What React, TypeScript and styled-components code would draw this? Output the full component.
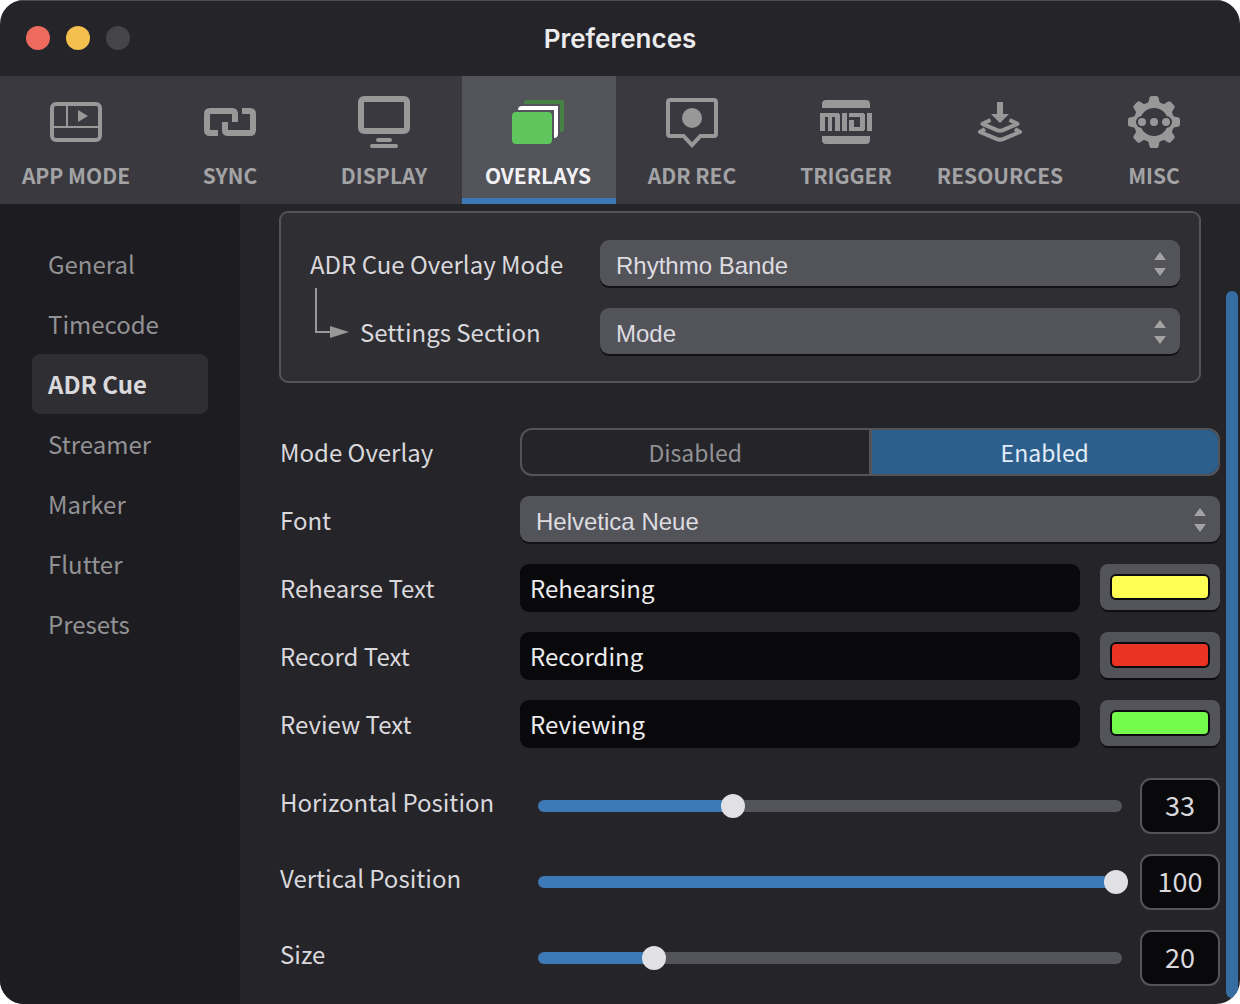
import React, { useState } from 'react';
import styled, { createGlobalStyle } from 'styled-components';

const color = {
  window: '#252429',
  toolbar: '#3a393f',
  sidebar: '#1d1c20',
  raised: '#53535a',
  panel: '#2f2e33',
  field: '#09090b',
  accent: '#3d7ab5',
  accentDeep: '#2d5f8c',
  scroll: '#366da2',
  text: '#d9d8dc',
  muted: '#929295',
  icon: '#989898',
};

const sans = '"Noto Sans CJK SC", "Open Sans", sans-serif';
const helvetica = '"Liberation Sans", Arial, sans-serif';

const GlobalStyle = createGlobalStyle`
  * { box-sizing: border-box; }
  body { margin: 0; background: #fff; font-family: ${sans}; }
  button, input, select { font: inherit; margin: 0; }
`;

const Window = styled.div`
  display: flex;
  flex-direction: column;
  min-height: 100vh;
  overflow: hidden;
  border-radius: 24px;
  background: ${color.window};
  color: ${color.text};
`;

const TitleBar = styled.header`
  display: grid;
  grid-template-columns: 1fr auto 1fr;
  align-items: center;
  height: 76px;
  padding: 0 26px;
  box-shadow: inset 0 1px 0 #4c4c50;
`;

const Lights = styled.div`
  display: flex;
  gap: 16px;
`;

const Light = styled.button<{ $fill: string }>`
  width: 24px;
  height: 24px;
  padding: 0;
  border: 0;
  border-radius: 50%;
  background: ${(p) => p.$fill};
`;

const Title = styled.h1`
  margin: 0;
  padding-top: 2px;
  font: 600 26px/32px Inter, sans-serif;
  color: #ececee;
`;

const Toolbar = styled.nav`
  display: flex;
  padding-right: 8px;
  background: ${color.toolbar};
`;

const Tab = styled.button<{ $active: boolean }>`
  display: flex;
  flex: 1;
  flex-direction: column;
  align-items: center;
  gap: 11px;
  min-width: 0;
  height: 128px;
  padding: 20px 2px 0 0;
  border: 0;
  border-bottom: 6px solid ${(p) => (p.$active ? color.accent : 'transparent')};
  background: ${(p) => (p.$active ? color.raised : 'transparent')};
  color: ${(p) => (p.$active ? '#f2f2f6' : '#a3a3a6')};
  font-size: 21px;
  font-weight: 700;
  line-height: 32px;
  white-space: nowrap;

  svg { color: ${color.icon}; }
`;

const Body = styled.div`
  display: flex;
  flex: 1;
`;

const Sidebar = styled.nav`
  display: flex;
  flex-direction: column;
  flex: none;
  width: 240px;
  padding: 30px 32px;
  background: ${color.sidebar};
`;

const SideItem = styled.button<{ $active: boolean }>`
  height: 60px;
  padding: 0 16px;
  border: 0;
  border-radius: 8px;
  background: ${(p) => (p.$active ? color.panel : 'transparent')};
  color: ${(p) => (p.$active ? color.text : color.muted)};
  font-size: 24px;
  font-weight: ${(p) => (p.$active ? 700 : 400)};
  line-height: 36px;
  text-align: left;
`;

const Content = styled.main`
  display: flex;
  flex: 1;
  flex-direction: column;
  min-width: 0;
  padding: 8px 6px 18px 40px;
`;

const Group = styled.section`
  display: flex;
  flex-direction: column;
  gap: 20px;
  margin: 0 20px 46px 0;
  padding: 28px 20px 26px 30px;
  border-radius: 8px;
  outline: 2px solid ${color.raised};
  outline-offset: -1px;
  background: ${color.panel};
`;

const Stack = styled.section`
  display: flex;
  flex-direction: column;
  gap: 20px;

  & + & { margin-top: 30px; }
`;

const Row = styled.div<{ $label: number }>`
  display: grid;
  grid-template-columns: ${(p) => p.$label}px 1fr;
  align-items: center;
`;

const Label = styled.label`
  font-size: 24px;
  line-height: 36px;
  white-space: nowrap;
`;

const SliderLabel = styled(Label)`
  padding-bottom: 8px;
`;

const SubLabel = styled.div`
  display: flex;
  align-items: center;
  gap: 10px;

  svg { margin-top: -20px; color: ${color.icon}; }
`;

const SelectBox = styled.div`
  position: relative;
  height: 48px;

  svg {
    position: absolute;
    top: 12px;
    right: 14px;
    color: #a3a3a3;
    pointer-events: none;
  }
`;

const Select = styled.select`
  width: 100%;
  height: 46px;
  padding: 6px 16px 0;
  border: 0;
  border-radius: 9px;
  appearance: none;
  background: ${color.raised};
  box-shadow: 0 2px 0 #121215;
  color: #dddce0;
  font: 24px/32px ${helvetica};
`;

const Segments = styled.div`
  display: flex;
  height: 48px;
  overflow: hidden;
  border: 2px solid ${color.raised};
  border-radius: 12px;
`;

const Segment = styled.button<{ $on: boolean }>`
  flex: 1;
  padding: 0;
  border: 0;
  background: ${(p) => (p.$on ? color.accentDeep : 'transparent')};
  color: ${(p) => (p.$on ? '#e2edf7' : color.muted)};
  font-size: 23px;
  line-height: 32px;

  & + & { border-left: 3px solid ${color.raised}; }
`;

const FieldPair = styled.div`
  display: flex;
  align-items: flex-start;
  gap: 20px;
`;

const TextField = styled.input`
  flex: 1;
  min-width: 0;
  height: 48px;
  padding: 0 10px 2px;
  border: 0;
  border-radius: 9px;
  background: ${color.field};
  color: #ececee;
  font-size: 24px;
`;

const ColorWell = styled.input`
  width: 120px;
  height: 46px;
  padding: 10px;
  border: 0;
  border-radius: 8px;
  appearance: none;
  background: ${color.raised};
  box-shadow: 0 2px 0 #0e0e11;

  &::-webkit-color-swatch-wrapper { padding: 0; }
  &::-webkit-color-swatch {
    border: 2px solid #0b0b0d;
    border-radius: 6px;
  }
`;

const SliderRow = styled.div`
  display: flex;
  align-items: center;
`;

const Slider = styled.input`
  flex: 1;
  min-width: 0;
  height: 12px;
  margin: 0 18px;
  border-radius: 6px;
  appearance: none;
  background: linear-gradient(${color.accent}, ${color.accent}) left / var(--fill) 100% no-repeat ${color.raised};

  &::-webkit-slider-runnable-track {
    height: 12px;
    margin: 0 -6px;
  }
  &::-webkit-slider-thumb {
    width: 24px;
    height: 24px;
    margin-top: -6px;
    border-radius: 50%;
    appearance: none;
    background: #e1e0e5;
  }
`;

const NumberField = styled.input`
  width: 80px;
  height: 56px;
  padding: 0 0 4px;
  border: 2px solid ${color.raised};
  border-radius: 11px;
  background: ${color.field};
  color: ${color.text};
  font-size: 27px;
  text-align: center;
`;

const ScrollTrack = styled.div`
  display: flex;
  flex: none;
  flex-direction: column;
  justify-content: flex-end;
  width: 14px;
  padding: 0 2px 6px 0;
`;

const ScrollThumb = styled.div`
  height: 89%;
  border-radius: 6px;
  background: ${color.scroll};
`;

const Glyph = ({ children }: { children: React.ReactNode }) => (
  <svg width="52" height="52" viewBox="0 0 52 52" fill="none" aria-hidden="true">
    {children}
  </svg>
);

const AppModeIcon = () => (
  <Glyph>
    <rect x="2" y="8" width="48" height="36" rx="4" stroke="currentColor" strokeWidth="4" />
    <path d="M17 10V31M3 31H49" stroke="currentColor" strokeWidth="2" />
    <path d="M28 14L38 20L28 26Z" fill="currentColor" />
  </Glyph>
);

const SyncIcon = () => (
  <Glyph>
    <path
      d="M14 37H6Q3 37 3 34V18Q3 15 6 15H28Q31 15 31 18V26M38 15H46Q49 15 49 18V34Q49 37 46 37H24Q21 37 21 34V26"
      stroke="currentColor"
      strokeWidth="6"
    />
  </Glyph>
);

const DisplayIcon = () => (
  <Glyph>
    <rect x="3" y="3" width="46" height="32" rx="3" stroke="currentColor" strokeWidth="6" />
    <rect x="18" y="42" width="16" height="4" rx="2" fill="currentColor" />
    <rect x="12" y="48" width="28" height="4" rx="2" fill="currentColor" />
  </Glyph>
);

const OverlaysIcon = () => (
  <Glyph>
    <path d="M12 8Q12 4 16 4H52V32Q52 36 48 36V8Z" fill="#458344" />
    <path d="M6 14Q6 10 10 10H46V38Q46 42 42 42V14Z" fill="#fff" />
    <rect y="16" width="40" height="32" rx="4" fill="#5fc55c" />
  </Glyph>
);

const AdrRecIcon = () => (
  <Glyph>
    <path
      d="M4 4H48Q50 4 50 6V38Q50 40 48 40H34.500L26 49L17.500 40H4Q2 40 2 38V6Q2 4 4 4Z"
      stroke="currentColor"
      strokeWidth="4"
    />
    <circle cx="26" cy="22" r="10" fill="currentColor" />
  </Glyph>
);

const TriggerIcon = () => (
  <Glyph>
    <g fill="currentColor">
      <path d="M2 12V8Q2 4 6 4H46Q50 4 50 8V12ZM2 40V44Q2 48 6 48H46Q50 48 50 44V40Z" />
      <rect x="0" y="17" width="19" height="4" />
      <rect x="0" y="17" width="5" height="18" />
      <rect x="8" y="17" width="4" height="18" />
      <rect x="15" y="18" width="5" height="17" />
      <rect x="22" y="17" width="5" height="18" />
      <rect x="29" y="17" width="15" height="4" />
      <rect x="40" y="18" width="5" height="16" />
      <rect x="29" y="31" width="15" height="4" />
      <rect x="29" y="24" width="5" height="11" />
      <rect x="47" y="17" width="5" height="18" />
    </g>
  </Glyph>
);

const ResourcesIcon = () => (
  <Glyph>
    <path d="M23 6H29V18H35L26 27L17 18H23Z" fill="currentColor" />
    <path
      d="M16.500 24L8.500 27.800L23 34.200Q26 35.400 29 34.200L43.500 27.800L35.500 24M11 33L6 36L23 43.200Q26 44.400 29 43.200L46 36L41 33"
      stroke="currentColor"
      strokeWidth="4"
      strokeLinejoin="round"
    />
  </Glyph>
);

const MiscIcon = () => (
  <Glyph>
    <circle cx="26" cy="26" r="17" stroke="currentColor" strokeWidth="6" />
    {[0, 45, 90, 135, 180, 225, 270, 315].map((angle) => (
      <path
        key={angle}
        d="M18 8L20.500 6L21.500 1.500Q22 0 23.500 0H28.500Q30 0 30.500 1.500L31.500 6L34 8Z"
        fill="currentColor"
        transform={`rotate(${angle} 26 26)`}
      />
    ))}
    <circle cx="14" cy="26" r="6" fill={color.toolbar} />
    <circle cx="38" cy="26" r="6" fill={color.toolbar} />
    <circle cx="14" cy="26" r="4" fill="currentColor" />
    <circle cx="26" cy="26" r="4" fill="currentColor" />
    <circle cx="38" cy="26" r="4" fill="currentColor" />
  </Glyph>
);

const BranchArrow = () => (
  <svg width="40" height="68" viewBox="0 0 40 68" fill="none" aria-hidden="true">
    <path d="M6 0V44H21" stroke="currentColor" strokeWidth="2" />
    <path d="M20 38L39 44L20 50Z" fill="currentColor" />
  </svg>
);

const tabs = [
  { name: 'APP MODE', Icon: AppModeIcon },
  { name: 'SYNC', Icon: SyncIcon },
  { name: 'DISPLAY', Icon: DisplayIcon },
  { name: 'OVERLAYS', Icon: OverlaysIcon },
  { name: 'ADR REC', Icon: AdrRecIcon },
  { name: 'TRIGGER', Icon: TriggerIcon },
  { name: 'RESOURCES', Icon: ResourcesIcon },
  { name: 'MISC', Icon: MiscIcon },
];

const sections = ['General', 'Timecode', 'ADR Cue', 'Streamer', 'Marker', 'Flutter', 'Presets'];

const texts = [
  { id: 'rehearse', label: 'Rehearse Text', value: 'Rehearsing', swatch: '#ffff54' },
  { id: 'record', label: 'Record Text', value: 'Recording', swatch: '#ea3323' },
  { id: 'review', label: 'Review Text', value: 'Reviewing', swatch: '#75fb4c' },
];

const sliders = [
  { id: 'horizontal', label: 'Horizontal Position', value: 33, min: 0 },
  { id: 'vertical', label: 'Vertical Position', value: 100, min: 0 },
  { id: 'size', label: 'Size', value: 20, min: 1 },
];

const Picker = ({ id, options }: { id: string; options: string[] }) => (
  <SelectBox>
    <Select id={id}>
      {options.map((option) => (
        <option key={option}>{option}</option>
      ))}
    </Select>
    <svg width="12" height="24" viewBox="0 0 12 24" fill="currentColor" aria-hidden="true">
      <path d="M6 0L12 8H0ZM0 16H12L6 24Z" />
    </svg>
  </SelectBox>
);

type SliderSettingProps = { id: string; label: string; value: number; min: number };

const SliderSetting = ({ id, label, value: initial, min }: SliderSettingProps) => {
  const [value, setValue] = useState(initial);
  const ratio = (value - min) / (100 - min);
  const fill = { '--fill': `calc(6px + (100% - 12px) * ${ratio})` } as React.CSSProperties;
  return (
    <Row $label={240}>
      <SliderLabel htmlFor={id}>{label}</SliderLabel>
      <SliderRow>
        <Slider
          id={id}
          type="range"
          min={min}
          max={100}
          value={value}
          style={fill}
          onChange={(e) => setValue(Number(e.target.value))}
        />
        <NumberField
          aria-label={`${label} value`}
          inputMode="numeric"
          value={value}
          onChange={(e) => setValue(Math.min(100, Math.max(min, Number(e.target.value) || min)))}
        />
      </SliderRow>
    </Row>
  );
};

export default function App() {
  const [tab, setTab] = useState('OVERLAYS');
  const [section, setSection] = useState('ADR Cue');
  const [mode, setMode] = useState('Enabled');

  return (
    <>
      <GlobalStyle />
      <Window>
        <TitleBar>
          <Lights>
            <Light $fill="#ed6a5f" aria-label="Close" />
            <Light $fill="#f5bf4f" aria-label="Minimize" />
            <Light $fill="#454549" aria-label="Zoom" disabled />
          </Lights>
          <Title>Preferences</Title>
        </TitleBar>
        <Toolbar>
          {tabs.map(({ name, Icon }) => (
            <Tab key={name} $active={name === tab} onClick={() => setTab(name)}>
              <Icon />
              {name}
            </Tab>
          ))}
        </Toolbar>
        <Body>
          <Sidebar>
            {sections.map((name) => (
              <SideItem key={name} $active={name === section} onClick={() => setSection(name)}>
                {name}
              </SideItem>
            ))}
          </Sidebar>
          <Content>
            <Group>
              <Row $label={290}>
                <Label htmlFor="overlay-mode">ADR Cue Overlay Mode</Label>
                <Picker id="overlay-mode" options={['Rhythmo Bande']} />
              </Row>
              <Row $label={290}>
                <SubLabel>
                  <BranchArrow />
                  <Label htmlFor="settings-section">Settings Section</Label>
                </SubLabel>
                <Picker id="settings-section" options={['Mode']} />
              </Row>
            </Group>
            <Stack>
              <Row $label={240}>
                <Label as="span" id="mode-label">Mode Overlay</Label>
                <Segments role="group" aria-labelledby="mode-label">
                  {['Disabled', 'Enabled'].map((name) => (
                    <Segment
                      key={name}
                      $on={name === mode}
                      aria-pressed={name === mode}
                      onClick={() => setMode(name)}
                    >
                      {name}
                    </Segment>
                  ))}
                </Segments>
              </Row>
              <Row $label={240}>
                <Label htmlFor="font">Font</Label>
                <Picker id="font" options={['Helvetica Neue']} />
              </Row>
              {texts.map(({ id, label, value, swatch }) => (
                <Row key={id} $label={240}>
                  <Label htmlFor={id}>{label}</Label>
                  <FieldPair>
                    <TextField id={id} type="text" defaultValue={value} />
                    <ColorWell type="color" defaultValue={swatch} aria-label={`${label} color`} />
                  </FieldPair>
                </Row>
              ))}
            </Stack>
            <Stack>
              {sliders.map((slider) => (
                <SliderSetting key={slider.id} {...slider} />
              ))}
            </Stack>
          </Content>
          <ScrollTrack>
            <ScrollThumb />
          </ScrollTrack>
        </Body>
      </Window>
    </>
  );
}
